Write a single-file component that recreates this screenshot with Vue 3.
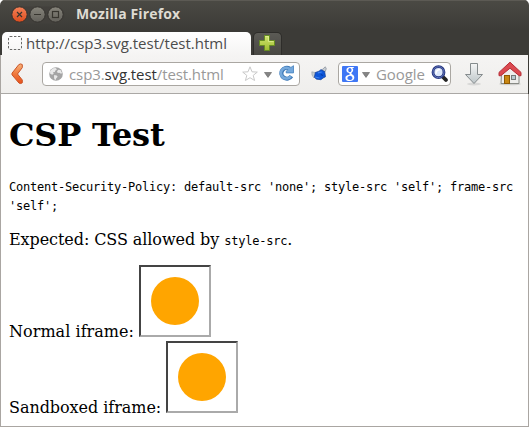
<script setup>
const frames = [
  { label: 'Normal iframe:', kind: 'normal' },
  { label: 'Sandboxed iframe:', kind: 'sandboxed' },
]
</script>

<template>
  <div class="window">
    <header class="titlebar">
      <svg class="controls" width="62" height="20" viewBox="0 0 62 20">
        <defs>
          <linearGradient id="red" x1="0" y1="0" x2="0" y2="1"><stop offset="0" stop-color="#f58258" /><stop offset="1" stop-color="#dc4b1d" /></linearGradient>
          <linearGradient id="grey" x1="0" y1="0" x2="0" y2="1"><stop offset="0" stop-color="#86847b" /><stop offset="1" stop-color="#62605a" /></linearGradient>
        </defs>
        <rect x="0.5" y="1.5" width="54" height="17" rx="8.5" fill="#42403c" />
        <circle cx="9.5" cy="9.5" r="7.7" fill="url(#red)" stroke="#34322e" />
        <circle cx="27.5" cy="9.5" r="7.7" fill="url(#grey)" stroke="#34322e" />
        <circle cx="45.5" cy="9.5" r="7.7" fill="url(#grey)" stroke="#34322e" />
        <g fill="none" stroke="#37352f" stroke-width="1.2">
          <path d="M7 7l5 5M12 7l-5 5" />
          <path d="M24 9.5h7" />
          <rect x="42.5" y="6.5" width="6" height="6" />
        </g>
      </svg>
      <span class="title">Mozilla Firefox</span>
    </header>

    <nav class="tabs">
      <div class="tab">
        <svg class="favicon" width="14" height="14" viewBox="0 0 14 14">
          <rect x="0.5" y="0.5" width="13" height="13" rx="1.5" fill="none" stroke="#6b6b69" stroke-dasharray="2.4 1.6" />
        </svg>
        <span class="tab-text">http://csp3.svg.test/test.html</span>
      </div>
      <div class="newtab">
        <svg width="16" height="16" viewBox="0 0 16 16">
          <defs><linearGradient id="green" x1="0" y1="0" x2="0" y2="1"><stop offset="0" stop-color="#d2e672" /><stop offset="1" stop-color="#9dbb2f" /></linearGradient></defs>
          <path d="M5.5 .5h5v5h5v5h-5v5h-5v-5h-5v-5h5z" fill="url(#green)" stroke="#668c22" />
          <path d="M6.5 1.5h3v5h5" fill="none" stroke="#e4f09c" stroke-width=".7" />
        </svg>
      </div>
    </nav>

    <div class="toolbar">
      <svg class="back" width="13" height="22" viewBox="0 0 13 22">
        <defs><linearGradient id="orange" x1="0" y1="0" x2="0" y2="1"><stop offset="0" stop-color="#f8b47c" /><stop offset=".5" stop-color="#f07a3e" /><stop offset="1" stop-color="#e8501c" /></linearGradient></defs>
        <path d="M7.8 1.6Q9.8 .2 11.3 1.6v3L6.5 11l4.8 6v2.8q-1.5 1.4-3.3 .3L1 11.8v-1.6z" fill="url(#orange)" stroke="#c85427" stroke-width="1" stroke-linejoin="round" />
      </svg>

      <div class="field address">
        <svg class="globe" width="14" height="14" viewBox="0 0 14 14">
          <circle cx="7" cy="7" r="6.8" fill="#a5a5a5" />
          <path d="M1 4.6Q2 2.3 4.2 1.2L6.5 1 8 2.2 6.4 3.4 5.8 5 4 5.3 4.7 6.8 3.2 7.7 1.2 6.7zM9.2 2.8l2.3.3 1.6 3-1 .6-1.8-1-1.5.4-.8-1.6zM5.2 8l2.5.4 1 1.4-1.5 1.5-.5 1.8-1.3-.8L5 10z" fill="#e9e9e9" />
        </svg>
        <span class="url">csp3.<b>svg.test</b>/test.html</span>
        <svg class="star" width="16" height="16" viewBox="0 0 16 16">
          <path d="M8 .8l2 5 5.3.3-4.1 3.3 1.4 5.1L8 11.7l-4.6 2.8 1.4-5.1L.7 6.1 6 5.8z" fill="#fff" stroke="#c9c9c9" stroke-linejoin="round" />
        </svg>
        <svg class="drop" width="8" height="6" viewBox="0 0 8 6"><path d="M.5 .5h7L4 5.4z" fill="#858585" stroke="#6d6d6d" stroke-width=".7" /></svg>
        <svg class="reload" width="16" height="16" viewBox="0 0 16 16">
          <path d="M13.4 11.2A5.4 5.4 0 1 1 11.6 3.6" fill="none" stroke="#3d78b6" stroke-width="4.2" />
          <path d="M15.5 .7v7.2H8.2V6.2l2.3-2.2z" fill="#74a8dc" stroke="#4580bd" stroke-width=".8" />
          <path d="M12.7 11.2A5.4 5.4 0 1 1 12 4.2" fill="none" stroke="#76a9dc" stroke-width="2.6" />
        </svg>
      </div>

      <svg class="addon" width="17" height="16" viewBox="0 0 17 16">
        <path d="M.8 5.8l4.7 1-2.7 5L1 9z" fill="#c7cdd2" stroke="#969da5" stroke-width=".6" />
        <path d="M10 4.7L14.3.8l1 2-1.2 3z" fill="#c7cdd2" stroke="#858d99" stroke-width=".7" />
        <path d="M4.3 6.5L8 5.2l2-1.6 3.7 2 .8 5.2-2.4 1.2-2.2 1.7-4.3-.5-2.2-1.8z" fill="#0d56d9" stroke="#164195" stroke-width=".7" />
        <path d="M6.8 6.8l4-.8M4.2 11l4.3 1" stroke="#3b83f1" stroke-width="1.2" />
        <path d="M9.8 8.5l2.2 1" stroke="#063ba9" stroke-width="1.3" />
      </svg>

      <div class="field search">
        <svg class="google" width="16" height="16" viewBox="0 0 16 16">
          <rect width="16" height="16" rx="1" fill="#3f77f5" />
          <path d="M12.3 1H8.1Q4.4 1.2 4.4 4.2q.2 2.6 3.2 2.8c-.7 1 0 1.4.3 1.8-3 .2-4.5 1.2-4.5 3.1 0 2.3 2 3.1 4.3 3.1 3 0 4.6-1.5 4.6-3.5 0-2.8-2.9-2.9-2.9-4.2 0-.9 1.8-1.2 1.8-3.3 0-1.1-.5-1.7-1.1-2.1h1.3zM7.9 1.9c2.2 0 2.2 4.2 0 4.2S5.7 2 7.9 1.9zm.6 7.8c2.7 1 2.6 4.3-.6 4.3-3.4 0-3.4-4.2.6-4.3z" fill="#fff" fill-rule="evenodd" />
        </svg>
        <svg class="drop" width="8" height="6" viewBox="0 0 8 6"><path d="M.5 .5h7L4 5.4z" fill="#858585" stroke="#6d6d6d" stroke-width=".7" /></svg>
        <span class="engine">Google</span>
        <svg class="lens" width="17" height="17" viewBox="0 0 17 17">
          <path d="M11.5 11.5l3.4 3.4" stroke="#252525" stroke-width="3.8" stroke-linecap="round" />
          <circle cx="7.5" cy="7.2" r="5.5" fill="#dce7fa" stroke="#26367e" stroke-width="2.8" />
          <circle cx="7.5" cy="7.2" r="5.5" fill="none" stroke="#6376bd" stroke-width="1" />
          <path d="M5 8.8Q5 4.7 9 4.5" fill="none" stroke="#fff" stroke-width="1.5" />
        </svg>
      </div>

      <svg class="download" width="20" height="24" viewBox="0 0 20 24">
        <defs><linearGradient id="steel" x1="0" y1="0" x2="0" y2="1"><stop offset="0" stop-color="#f5f6f6" /><stop offset="1" stop-color="#bdc5c8" /></linearGradient></defs>
        <ellipse cx="10" cy="22" rx="7" ry="1.5" fill="#d8d8d7" />
        <path d="M6.5 1.5h7v11h5L10 21.5 1.5 12.5h5z" fill="url(#steel)" stroke="#858b8d" stroke-linejoin="round" />
      </svg>

      <svg class="home" width="24" height="25" viewBox="0 0 24 25">
        <ellipse cx="12" cy="23" rx="11" ry="1.3" fill="#cfcfcd" />
        <path d="M3.5 12L12 4l9 8v10.5h-18z" fill="#eeeeec" stroke="#888a85" />
        <rect x="6.5" y="14.5" width="5" height="8" fill="#c88712" stroke="#8f5902" />
        <rect x="13.5" y="14.5" width="4" height="4" fill="#b7c9d0" stroke="#747a78" />
        <path d="M12 1.2L23 11.4v3.3h-1.8L12 7.2l-9.2 7.5H1v-3.3z" fill="#db4950" stroke="#b52d36" stroke-linejoin="round" />
      </svg>
    </div>

    <main class="page">
      <h1>CSP Test</h1>
      <p><code>Content-Security-Policy: default-src 'none'; style-src 'self'; frame-src 'self';</code></p>
      <p class="expected">Expected: CSS allowed by <code>style-src</code>.</p>
      <p>
        <span v-for="f in frames" :key="f.kind" class="row" :class="f.kind">{{ f.label }} <svg class="frame" width="68" height="68" viewBox="0 0 68 68"><circle cx="34" cy="34" r="24" fill="orange" /></svg></span>
      </p>
    </main>
  </div>
</template>

<style>
body { background: #fff; overflow: hidden; }
</style>

<style scoped>
.window {
  box-sizing: border-box;
  width: 529px;
  height: 427px;
  display: flex;
  flex-direction: column;
  font-family: "Open Sans", "Noto Sans", sans-serif;
  background: linear-gradient(#4b4a44, #3c3b37 30px);
  border-radius: 5px 5px 0 0;
  overflow: hidden;
}
.titlebar {
  box-sizing: border-box;
  height: 31px;
  flex: none;
  display: flex;
  align-items: center;
  padding: 0 0 2px 10px;
  border-top: 1px solid #5c5a54;
}
.title {
  margin: -2px 0 0 4px;
  font-size: 14px;
  font-weight: 700;
  line-height: 20px;
  letter-spacing: 0.12px;
  color: #dfdbd2;
  white-space: nowrap;
}
.tabs {
  height: 24px;
  flex: none;
  display: flex;
  gap: 2px;
  align-items: stretch;
  padding: 0 2px;
}
.tab {
  box-sizing: border-box;
  width: 249px;
  margin-top: 1px;
  display: flex;
  align-items: center;
  padding-left: 6px;
  gap: 4px;
  background: linear-gradient(#fff, #f5f4f3);
  border-radius: 5px 5px 0 0;
}
.favicon { margin-bottom: 1px; }
.tab-text {
  margin-top: -1px;
  font-size: 15px;
  line-height: 22px;
  color: #4c4c4c;
  white-space: nowrap;
}
.newtab {
  box-sizing: border-box;
  width: 29px;
  margin-top: 1px;
  padding: 2px 0 0 5px;
  background: linear-gradient(#5b5a55, #484742);
  border: 1px solid #2e2d2a;
  border-bottom: 0;
  border-radius: 5px 5px 0 0;
}
.newtab svg { display: block; }
.toolbar {
  box-sizing: border-box;
  height: 39px;
  flex: none;
  display: flex;
  align-items: center;
  margin-right: 1px;
  padding: 0 5px 1px 10px;
  background: linear-gradient(#f5f4f3, #efeeec);
  border-left: 1px solid #a9a5a1;
  border-bottom: 1px solid #aaa8a5;
}
.toolbar svg { flex: none; }
.field {
  box-sizing: border-box;
  height: 24px;
  display: flex;
  align-items: center;
  border: 1px solid #aaa7a2;
  border-radius: 4px;
  background: #fff;
  font-size: 15px;
  line-height: 20px;
  letter-spacing: -0.1px;
  color: #999;
  white-space: nowrap;
}
.address { width: 258px; margin-left: 18px; padding-left: 6px; }
.url { width: 156px; margin-left: 6px; }
.url b { font-weight: 400; color: #333; }
.star { margin-left: 17px; }
.address .drop { margin: 2px 0 0 6px; }
.reload { margin: -2px 0 0 6px; }
.addon { margin-left: 11px; }
.search { width: 113px; margin-left: 10px; padding-left: 3px; }
.search .drop { margin: 2px 0 0 4px; }
.engine { width: 48px; margin-left: 6px; }
.lens { margin-left: 7px; margin-top: -1px; }
.download { margin-left: 13px; }
.home { margin-left: 14px; }
.page {
  box-sizing: border-box;
  flex: 1;
  min-height: 0;
  padding: 22px 8px 0;
  background: #fff;
  border: 1px solid #aaa6a2;
  border-top: 0;
  font-family: "DejaVu Serif", serif;
  font-size: 16px;
  line-height: 19px;
  color: #000;
}
.page h1 { margin: 0 0 22px; font-size: 32px; line-height: 38px; letter-spacing: -0.2px; }
.page p { margin: 0 0 16px; }
.page p code {
  font-family: "DejaVu Sans Mono", monospace;
  font-size: 12px;
  line-height: 0;
  letter-spacing: -0.225px;
}
.page .expected { letter-spacing: -0.08px; }
.normal { letter-spacing: 0.04px; }
.sandboxed { letter-spacing: -0.05px; }
.row { display: block; }
.frame {
  width: 68px;
  height: 68px;
  vertical-align: baseline;
  border: 2px solid;
  border-color: #444 #aaa #aaa #444;
}
</style>
